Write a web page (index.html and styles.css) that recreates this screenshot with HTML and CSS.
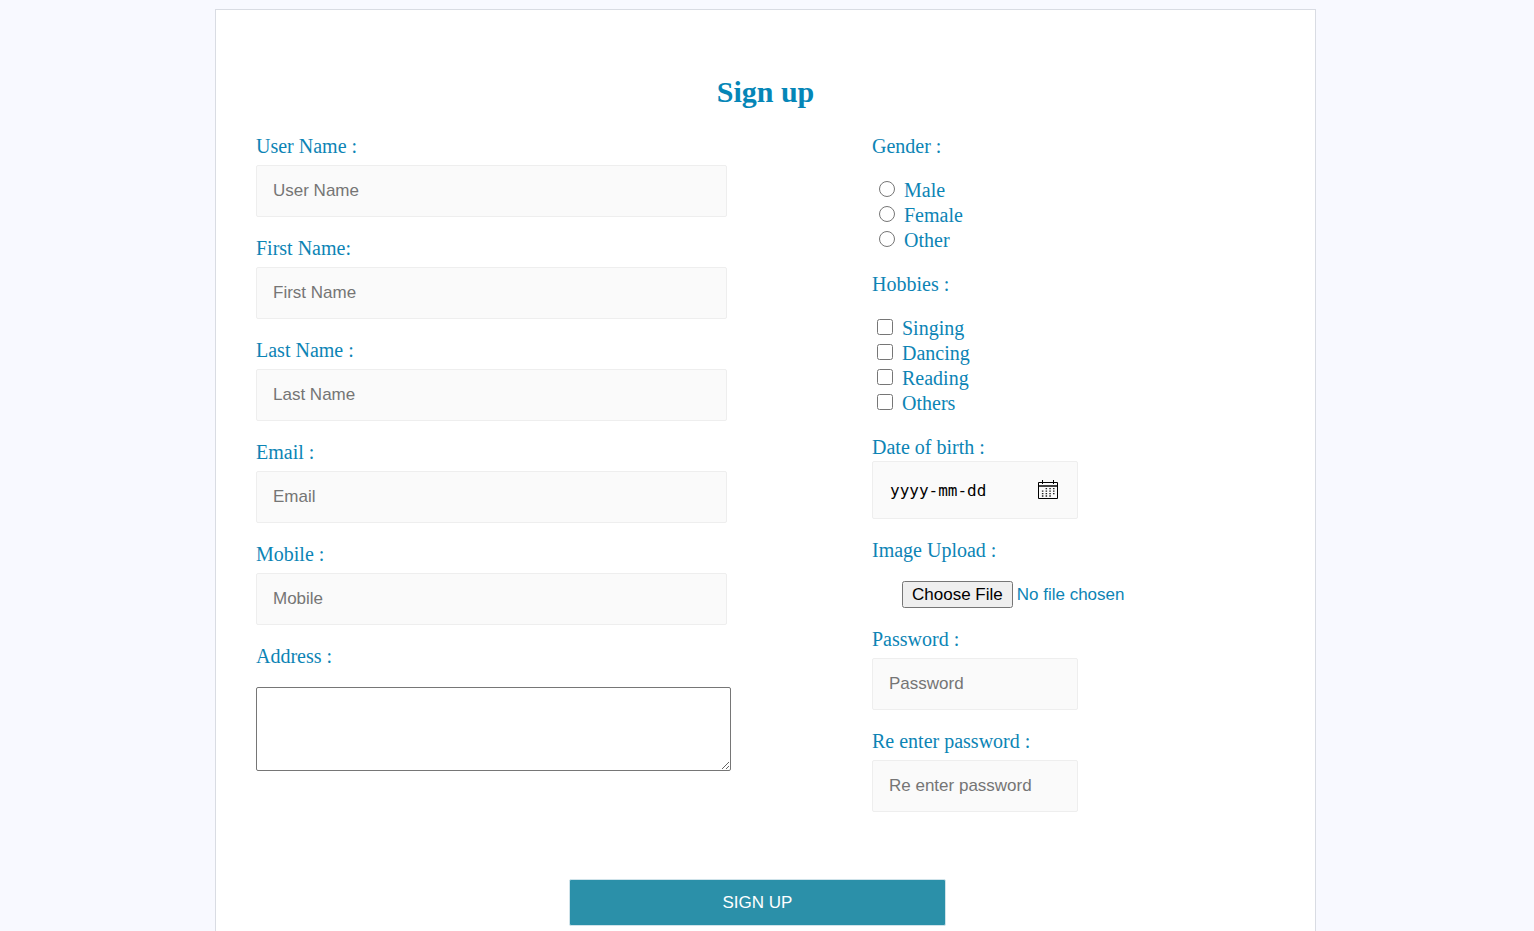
FILE: index.html
```html
<!DOCTYPE html>
<html lang="en">
<head>
<meta charset="utf-8">
<title>Sign up</title>
<link rel="stylesheet" href="styles.css">
</head>
<body>
<main class="card">
  <h1 class="title">Sign up</h1>
  <form class="form">
    <div class="columns">
      <div class="column">
        <div class="field"><label for="user">User Name :</label><input class="box" id="user" type="text" placeholder="User Name"></div>
        <div class="field"><label for="first">First Name:</label><input class="box" id="first" type="text" placeholder="First Name"></div>
        <div class="field"><label for="last">Last Name :</label><input class="box" id="last" type="text" placeholder="Last Name"></div>
        <div class="field"><label for="email">Email :</label><input class="box" id="email" type="email" placeholder="Email"></div>
        <div class="field"><label for="mobile">Mobile :</label><input class="box" id="mobile" type="tel" placeholder="Mobile"></div>
        <div class="field field-address"><label for="address">Address :</label><textarea class="address" id="address"></textarea></div>
      </div>
      <div class="column column-side">
        <fieldset class="group">
          <legend>Gender :</legend>
          <label class="choice choice-radio"><input type="radio" name="gender">Male</label>
          <label class="choice choice-radio"><input type="radio" name="gender">Female</label>
          <label class="choice choice-radio"><input type="radio" name="gender">Other</label>
        </fieldset>
        <fieldset class="group">
          <legend>Hobbies :</legend>
          <label class="choice"><input type="checkbox">Singing</label>
          <label class="choice"><input type="checkbox">Dancing</label>
          <label class="choice"><input type="checkbox">Reading</label>
          <label class="choice"><input type="checkbox">Others</label>
        </fieldset>
        <div class="field field-date">
          <label for="dob">Date of birth :</label>
          <div class="date">
            <input class="date-input" id="dob" type="text" placeholder="yyyy-mm-dd">
            <button class="date-button" type="button" aria-label="Choose date">
              <svg width="20" height="20" viewBox="0 0 20 20" fill="none" stroke="#000">
                <path d="M0.5 2.5H19.5V18.5H0.5ZM4.5 0V4M15.5 0V4"/>
                <path d="M0 6H20" stroke-width="1.5"/>
                <path stroke="#222" stroke-width="1.3" stroke-dasharray="1.5 2.2" d="M7.6 8.7H17M7.6 11.2H17M3.9 13.6H17M3.9 16H13.5M3.9 11.2H5.4"/>
              </svg>
            </button>
          </div>
        </div>
        <div class="field field-file"><label for="image">Image Upload :</label><input class="file" id="image" type="file"></div>
        <div class="field"><label for="pass">Password :</label><input class="box" id="pass" type="password" placeholder="Password"></div>
        <div class="field"><label for="again">Re enter password :</label><input class="box" id="again" type="password" placeholder="Re enter password"></div>
      </div>
    </div>
    <button class="submit" type="submit">SIGN UP</button>
  </form>
</main>
</body>
</html>
```
FILE: styles.css
```css
* { box-sizing: border-box; }

body {
  margin: 0;
  padding: 9px 18px 24px 15px;
  background: #f8f9ff;
  color: #0c84b5;
  font-family: "Liberation Serif", "Times New Roman", serif;
  font-size: 20px;
  line-height: 22px;
}

input, textarea, button { font-family: "Liberation Sans", Arial, sans-serif; font-size: 17px; }

.card {
  max-width: 1101px;
  margin: 0 auto;
  padding: 64px 40px 40px;
  border: 1px solid #d9dce3;
  background: #fff;
}

.title {
  margin: 0 0 25px;
  color: #0586b7;
  font-size: 30px;
  line-height: 36px;
  text-align: center;
}

.form { display: flex; flex-direction: column; }
.columns { display: grid; grid-template-columns: 616fr 403fr; }
.column { display: flex; flex-direction: column; gap: 20px; max-width: 471px; }
.column-side { max-width: 206px; }

.field { display: flex; flex-direction: column; gap: 8px; }

.box {
  width: 100%;
  height: 52px;
  padding: 0 16px;
  border: 1px solid #eee;
  border-radius: 2px;
  background: #fafafa;
}
.box::placeholder { color: #757575; }

.field-address { gap: 20px; }
.address {
  width: calc(100% + 4px);
  height: 84px;
  border: 1px solid #767676;
  border-radius: 2px;
  background: #fff;
}

.group { display: flex; flex-direction: column; margin: 0; padding: 0; border: 0; }
.group legend { margin-bottom: 21px; padding: 0; }

.choice { display: flex; align-items: center; gap: 9px; padding-left: 5px; line-height: 25px; }
.choice input { width: 16px; height: 16px; margin: 0 0 4px; }
.choice-radio { padding-left: 7px; }

.field-date { gap: 3px; }
.date {
  display: flex;
  align-items: center;
  height: 58px;
  padding: 0 19px 0 17px;
  border: 1px solid #eee;
  border-radius: 2px;
  background: #fafafa;
}
.date-input {
  flex: 1;
  min-width: 0;
  padding: 0;
  border: 0;
  background: none;
  font-family: "DejaVu Sans Mono", monospace;
  font-size: 16px;
}
.date-input::placeholder { color: #000; }
.date-button { display: flex; padding: 0; border: 0; background: none; }

.field-file { gap: 20px; }
.file { width: 260px; height: 27px; margin-left: 30px; color: #0c84b5; }
.file::file-selector-button { height: 27px; padding: 1px 8px; }

.submit {
  align-self: center;
  width: 37%;
  height: 47px;
  margin: 67px 16px 0 0;
  border: 1px solid #cfe3ea;
  border-radius: 2px;
  background: #2b90a9;
  color: #fff;
}
```
